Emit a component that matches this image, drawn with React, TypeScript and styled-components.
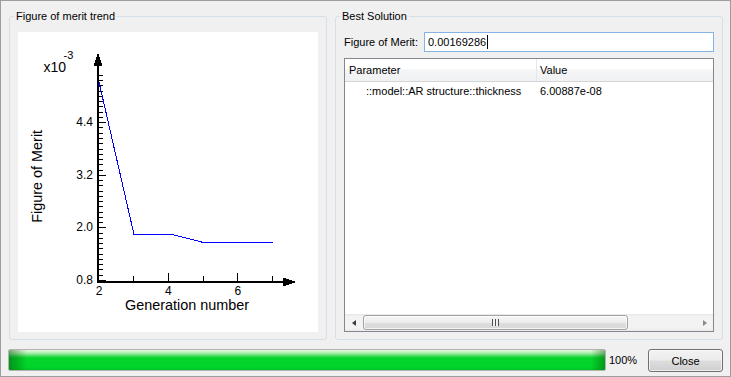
import React from "react";
import styled, { createGlobalStyle } from "styled-components";

const GlobalStyle = createGlobalStyle`
  html, body { margin: 0; padding: 0; background: #f0f0f0; }
  #root { width: 731px; height: 377px; }
  *, *::before, *::after { box-sizing: border-box; }
`;

const UI_FONT = `"Liberation Sans", Arial, sans-serif`;

const Window = styled.div`
  width: 731px;
  height: 377px;
  border: 1px solid #9d9d9d;
  background: #f0f0f0;
  display: flex;
  flex-direction: column;
  font-family: ${UI_FONT};
  font-size: 11px;
  color: #000;
`;

const TopRow = styled.div`
  display: flex;
  gap: 8px;
  padding: 9px 7px 0 8px;
`;

const GroupBox = styled.fieldset<{ $width: number }>`
  margin: 0;
  width: ${(p) => p.$width}px;
  height: 330px;
  min-width: 0;
  border: 1px solid #d5dfe5;
  border-radius: 3px;
  padding: 9px 8px 7px 8px;
  display: flex;
  flex-direction: column;
`;

const GroupTitle = styled.legend`
  padding: 0 2px;
  margin-left: -4px;
  font-size: 11px;
  line-height: 13px;
`;

const PlotArea = styled.div`
  flex: 1;
  background: #ffffff;
  display: flex;
`;

const FieldRow = styled.div`
  display: flex;
  align-items: center;
  height: 20px;
`;

const FieldLabel = styled.span`
  width: 80px;
  flex: none;
`;

const TextBox = styled.div`
  flex: 1;
  height: 20px;
  border: 1px solid #84b4e4;
  background: #fff;
  padding: 0 3px;
  display: flex;
  align-items: center;
`;

const Caret = styled.span`
  width: 1px;
  height: 14px;
  background: #000;
  margin-left: 1px;
`;

const TreeView = styled.div`
  margin-top: 6px;
  flex: 1;
  border: 1px solid #828790;
  background: #fff;
  display: flex;
  flex-direction: column;
  min-height: 0;
`;

const HeaderRow = styled.div`
  display: flex;
  height: 23px;
  flex: none;
  border-bottom: 1px solid #d5d5d5;
  background: linear-gradient(#ffffff 0%, #ffffff 45%, #f4f5f7 50%, #f0f1f3 100%);
`;

const HeaderCell = styled.div<{ $width?: number }>`
  display: flex;
  align-items: center;
  ${(p) => (p.$width ? `width: ${p.$width}px; flex: none;` : "flex: 1;")}
  padding-left: ${(p) => (p.$width ? 4 : 3)}px;
  border-right: ${(p) => (p.$width ? "1px solid #e3e8ee" : "none")};
`;

const DataRow = styled.div`
  display: flex;
  height: 18px;
  flex: none;
`;

const DataCell = styled.div<{ $width?: number; $indent: number }>`
  display: flex;
  align-items: center;
  ${(p) => (p.$width ? `width: ${p.$width}px; flex: none;` : "flex: 1;")}
  padding-left: ${(p) => p.$indent}px;
  white-space: nowrap;
  overflow: hidden;
`;

const Filler = styled.div`
  flex: 1;
`;

const HScrollBar = styled.div`
  height: 17px;
  flex: none;
  display: flex;
  background: linear-gradient(#e6e6e6 0%, #f3f3f3 15%, #f3f3f3 85%, #e9e9e9 100%);
`;

const ArrowButton = styled.div`
  width: 17px;
  flex: none;
  display: flex;
  align-items: center;
  justify-content: center;
`;

const ArrowGlyph = styled.span<{ $dir: "left" | "right" }>`
  width: 0;
  height: 0;
  border-top: 3.5px solid transparent;
  border-bottom: 3.5px solid transparent;
  ${(p) =>
    p.$dir === "left"
      ? "border-right: 4px solid #3c3c3c;"
      : "border-left: 4px solid #8a8a8a;"}
`;

const Track = styled.div`
  flex: 1;
  display: flex;
  align-items: center;
`;

const Thumb = styled.div<{ $width: number }>`
  width: ${(p) => p.$width}px;
  margin-left: 1px;
  height: 15px;
  border: 1px solid #a3a3a3;
  border-radius: 3px;
  background: linear-gradient(#f6f6f6 0%, #ececec 50%, #dedede 51%, #d8d8d8 100%);
  box-shadow: inset 0 0 0 1px rgba(255, 255, 255, 0.7);
  display: flex;
  align-items: center;
  justify-content: center;
`;

const Grip = styled.div`
  width: 7px;
  height: 7px;
  background: repeating-linear-gradient(to right, #4e4e4e 0 1px, #f2f2f2 1px 3px);
`;

const BottomRow = styled.div`
  display: flex;
  align-items: flex-start;
  padding: 9px 7px 4px 7px;
`;

const ProgressBar = styled.div`
  flex: 1;
  height: 22px;
  border: 1px solid #b2b2b2;
  border-radius: 2px;
  background: #e6e6e6;
  display: flex;
  overflow: hidden;
`;

const ProgressFill = styled.div`
  height: 100%;
  background:
    linear-gradient(to right, rgba(0, 70, 0, 0.45) 0px, rgba(0, 70, 0, 0) 18px, rgba(0, 70, 0, 0) calc(100% - 14px), rgba(0, 70, 0, 0.4) 100%),
    linear-gradient(to bottom, #e2f8df 0px, #c3f3bf 2px, #8ee896 4px, #3edb57 6px, #06d42c 8px, #00d42a 17px, #00c527 20px);
`;

const Percent = styled.div`
  width: 39px;
  margin-left: 3px;
  height: 22px;
  display: flex;
  align-items: center;
`;

const PushButton = styled.button`
  width: 75px;
  height: 23px;
  flex: none;
  padding: 0;
  border: 1px solid #707070;
  border-radius: 3px;
  background: linear-gradient(#f2f2f2 0%, #ebebeb 48%, #dddddd 52%, #cfcfcf 100%);
  box-shadow: inset 0 0 0 1px rgba(255, 255, 255, 0.65);
  font-family: ${UI_FONT};
  font-size: 11px;
  color: #000;
`;

const CHART_FONT = `"Liberation Sans", Arial, sans-serif`;

const yOf = (v: number) => 248 - (v - 0.8) * 43.83;
const xOf = (g: number) => 80.5 + (g - 2) * 34.7;

const TrendChart: React.FC = () => {
  const yTicks = Array.from({ length: 40 }, (_, i) => i);
  const yLabels = [
    { i: 30, t: "4.4" },
    { i: 20, t: "3.2" },
    { i: 10, t: "2.0" },
    { i: 0, t: "0.8" },
  ];
  const xTicks = [3, 4, 5, 6, 7];
  const xLabels = [2, 4, 6];
  return (
    <svg width="300" height="300" viewBox="0 0 300 300">
      <g stroke="#000" strokeWidth="1" shapeRendering="crispEdges">
        {yTicks.map((i) => {
          const y = Math.round(yOf(0.8 + i * 0.12)) + 0.5;
          const len = i % 10 === 0 ? 9 : 6;
          return <line key={`y${i}`} x1={79} x2={79 + len} y1={y} y2={y} />;
        })}
        {xTicks.map((g) => {
          const x = Math.round(xOf(g)) + 0.5;
          const len = g % 2 === 0 ? 8 : 5;
          return <line key={`x${g}`} x1={x} x2={x} y1={249} y2={249 - len} />;
        })}
        <line x1={80} x2={80} y1={33} y2={251} strokeWidth="2" />
        <line x1={79} x2={266} y1={250} y2={250} strokeWidth="2" />
      </g>
      <g fill="#000" shapeRendering="crispEdges">
        <polygon points="80,21 75.5,34 84.5,34" />
        <polygon points="265,245.5 278,250 265,254.5" />
      </g>
      <polyline
        points="81,50 116,202.5 154,202.5 185.5,210.5 255,210.5"
        fill="none"
        stroke="#0000ff"
        strokeWidth="1"
        shapeRendering="crispEdges"
      />
      <g fontFamily={CHART_FONT} fill="#000">
        {yLabels.map((l) => (
          <text
            key={l.t}
            x={75}
            y={yOf(0.8 + l.i * 0.12)}
            fontSize="12"
            textAnchor="end"
            dominantBaseline="central"
          >
            {l.t}
          </text>
        ))}
        {xLabels.map((g) => (
          <text key={g} x={xOf(g) + 0.5} y={259} fontSize="12" textAnchor="middle" dominantBaseline="central">
            {g}
          </text>
        ))}
        <text x={169} y={272.5} fontSize="14.4" textAnchor="middle" dominantBaseline="central">
          Generation number
        </text>
        <text
          x={19.5}
          y={144.3}
          fontSize="14.4"
          textAnchor="middle"
          dominantBaseline="central"
          transform="rotate(-90 19.5 144.3)"
        >
          Figure of Merit
        </text>
        <text x={25.5} y={35} fontSize="14" dominantBaseline="central">
          x10
        </text>
        <text x={45.5} y={23} fontSize="11" dominantBaseline="central">
          -3
        </text>
      </g>
    </svg>
  );
};

export default function App() {
  const progress = 100;
  return (
    <>
      <GlobalStyle />
      <Window>
        <TopRow>
          <GroupBox $width={318}>
            <GroupTitle>Figure of merit trend</GroupTitle>
            <PlotArea>
              <TrendChart />
            </PlotArea>
          </GroupBox>
          <GroupBox $width={388}>
            <GroupTitle>Best Solution</GroupTitle>
            <FieldRow>
              <FieldLabel>Figure of Merit:</FieldLabel>
              <TextBox>
                <span>0.00169286</span>
                <Caret />
              </TextBox>
            </FieldRow>
            <TreeView>
              <HeaderRow>
                <HeaderCell $width={192}>Parameter</HeaderCell>
                <HeaderCell>Value</HeaderCell>
              </HeaderRow>
              <DataRow>
                <DataCell $width={192} $indent={21}>
                  ::model::AR structure::thickness
                </DataCell>
                <DataCell $indent={3}>6.00887e-08</DataCell>
              </DataRow>
              <Filler />
              <HScrollBar>
                <ArrowButton>
                  <ArrowGlyph $dir="left" />
                </ArrowButton>
                <Track>
                  <Thumb $width={265}>
                    <Grip />
                  </Thumb>
                </Track>
                <ArrowButton>
                  <ArrowGlyph $dir="right" />
                </ArrowButton>
              </HScrollBar>
            </TreeView>
          </GroupBox>
        </TopRow>
        <BottomRow>
          <ProgressBar>
            <ProgressFill style={{ width: `${progress}%` }} />
          </ProgressBar>
          <Percent>{progress}%</Percent>
          <PushButton>Close</PushButton>
        </BottomRow>
      </Window>
    </>
  );
}
